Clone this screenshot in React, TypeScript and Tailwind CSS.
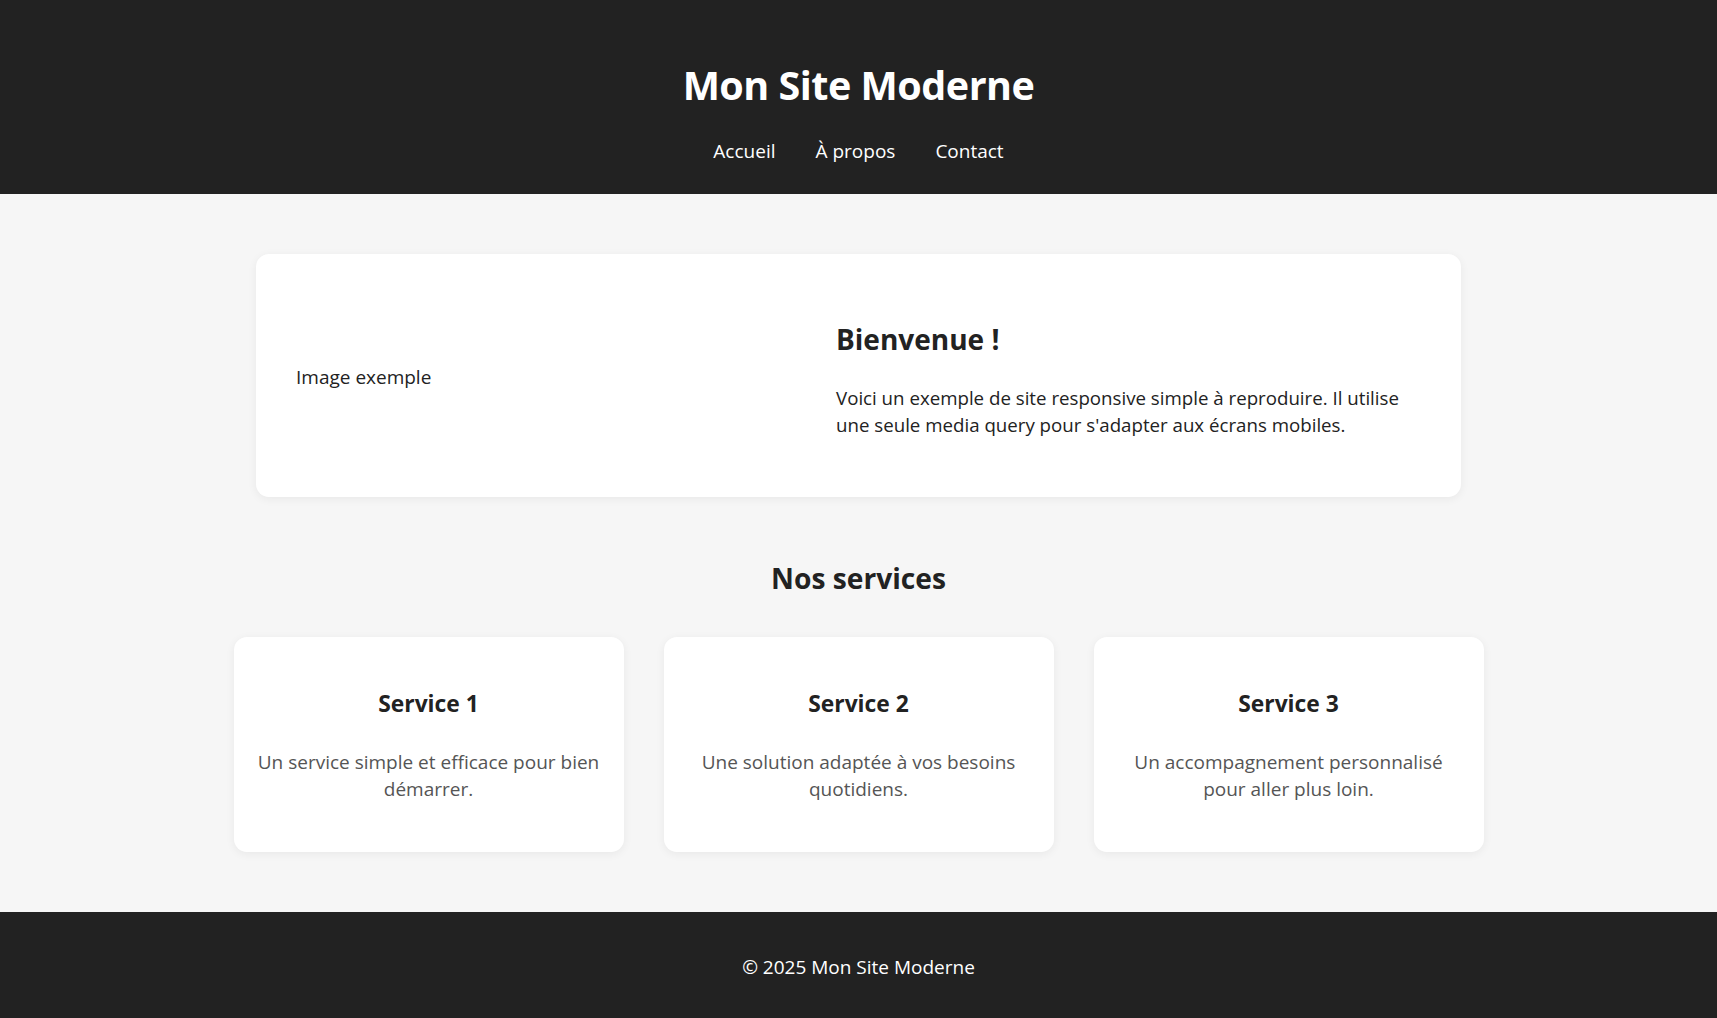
const services = [
  { title: 'Service 1', text: 'Un service simple et efficace pour bien démarrer.' },
  { title: 'Service 2', text: 'Une solution adaptée à vos besoins quotidiens.' },
  { title: 'Service 3', text: 'Un accompagnement personnalisé pour aller plus loin.' },
];

export default function App() {
  return (
    <div className="min-h-screen bg-[#f6f6f6] text-[#222] font-['Open_Sans',sans-serif]">
      <header className="bg-[#222] text-white text-center pt-[60px] pb-[28px]">
        <h1 className="text-[39.5px] leading-[50px] font-bold tracking-[-0.5px]">Mon Site Moderne</h1>
        <nav className="mt-[26px] flex justify-center gap-[40px] text-[19px] leading-[30px]">
          <a href="#">Accueil</a>
          <a href="#">À propos</a>
          <a href="#">Contact</a>
        </nav>
      </header>

      <main className="pt-[60px] pb-[60px]">
        <section className="w-[1205px] mx-auto bg-white rounded-[13px] shadow-[0_2px_10px_rgba(0,0,0,0.06)] px-[40px] pt-[58px] pb-[59px] grid grid-cols-[540px_1fr] items-center">
          <div className="text-[19px] leading-[27px] pt-[4px]">Image exemple</div>
          <div>
            <h2 className="mt-[12px] text-[28px] leading-[31px] font-bold">Bienvenue !</h2>
            <p className="mt-[29px] text-[18.7px] leading-[27px]">
              Voici un exemple de site responsive simple à reproduire. Il utilise une seule media query pour s'adapter aux écrans mobiles.
            </p>
          </div>
        </section>

        <h2 className="mt-[64px] text-center text-[28.2px] leading-[34px] font-bold">Nos services</h2>

        <div className="w-[1250px] mx-auto mt-[42px] grid grid-cols-3 gap-[40px]">
          {services.map((s) => (
            <div
              key={s.title}
              className="bg-white rounded-[13px] shadow-[0_2px_10px_rgba(0,0,0,0.06)] px-[22px] pt-[54px] pb-[49px] text-center"
            >
              <h3 className="text-[22.8px] leading-[26px] font-bold">{s.title}</h3>
              <p className="mt-[32px] text-[19px] leading-[27px] text-[#555]">{s.text}</p>
            </div>
          ))}
        </div>
      </main>

      <footer className="bg-[#222] text-white text-center py-[40px] text-[19px] leading-[30px]">
        © 2025 Mon Site Moderne
      </footer>
    </div>
  );
}
